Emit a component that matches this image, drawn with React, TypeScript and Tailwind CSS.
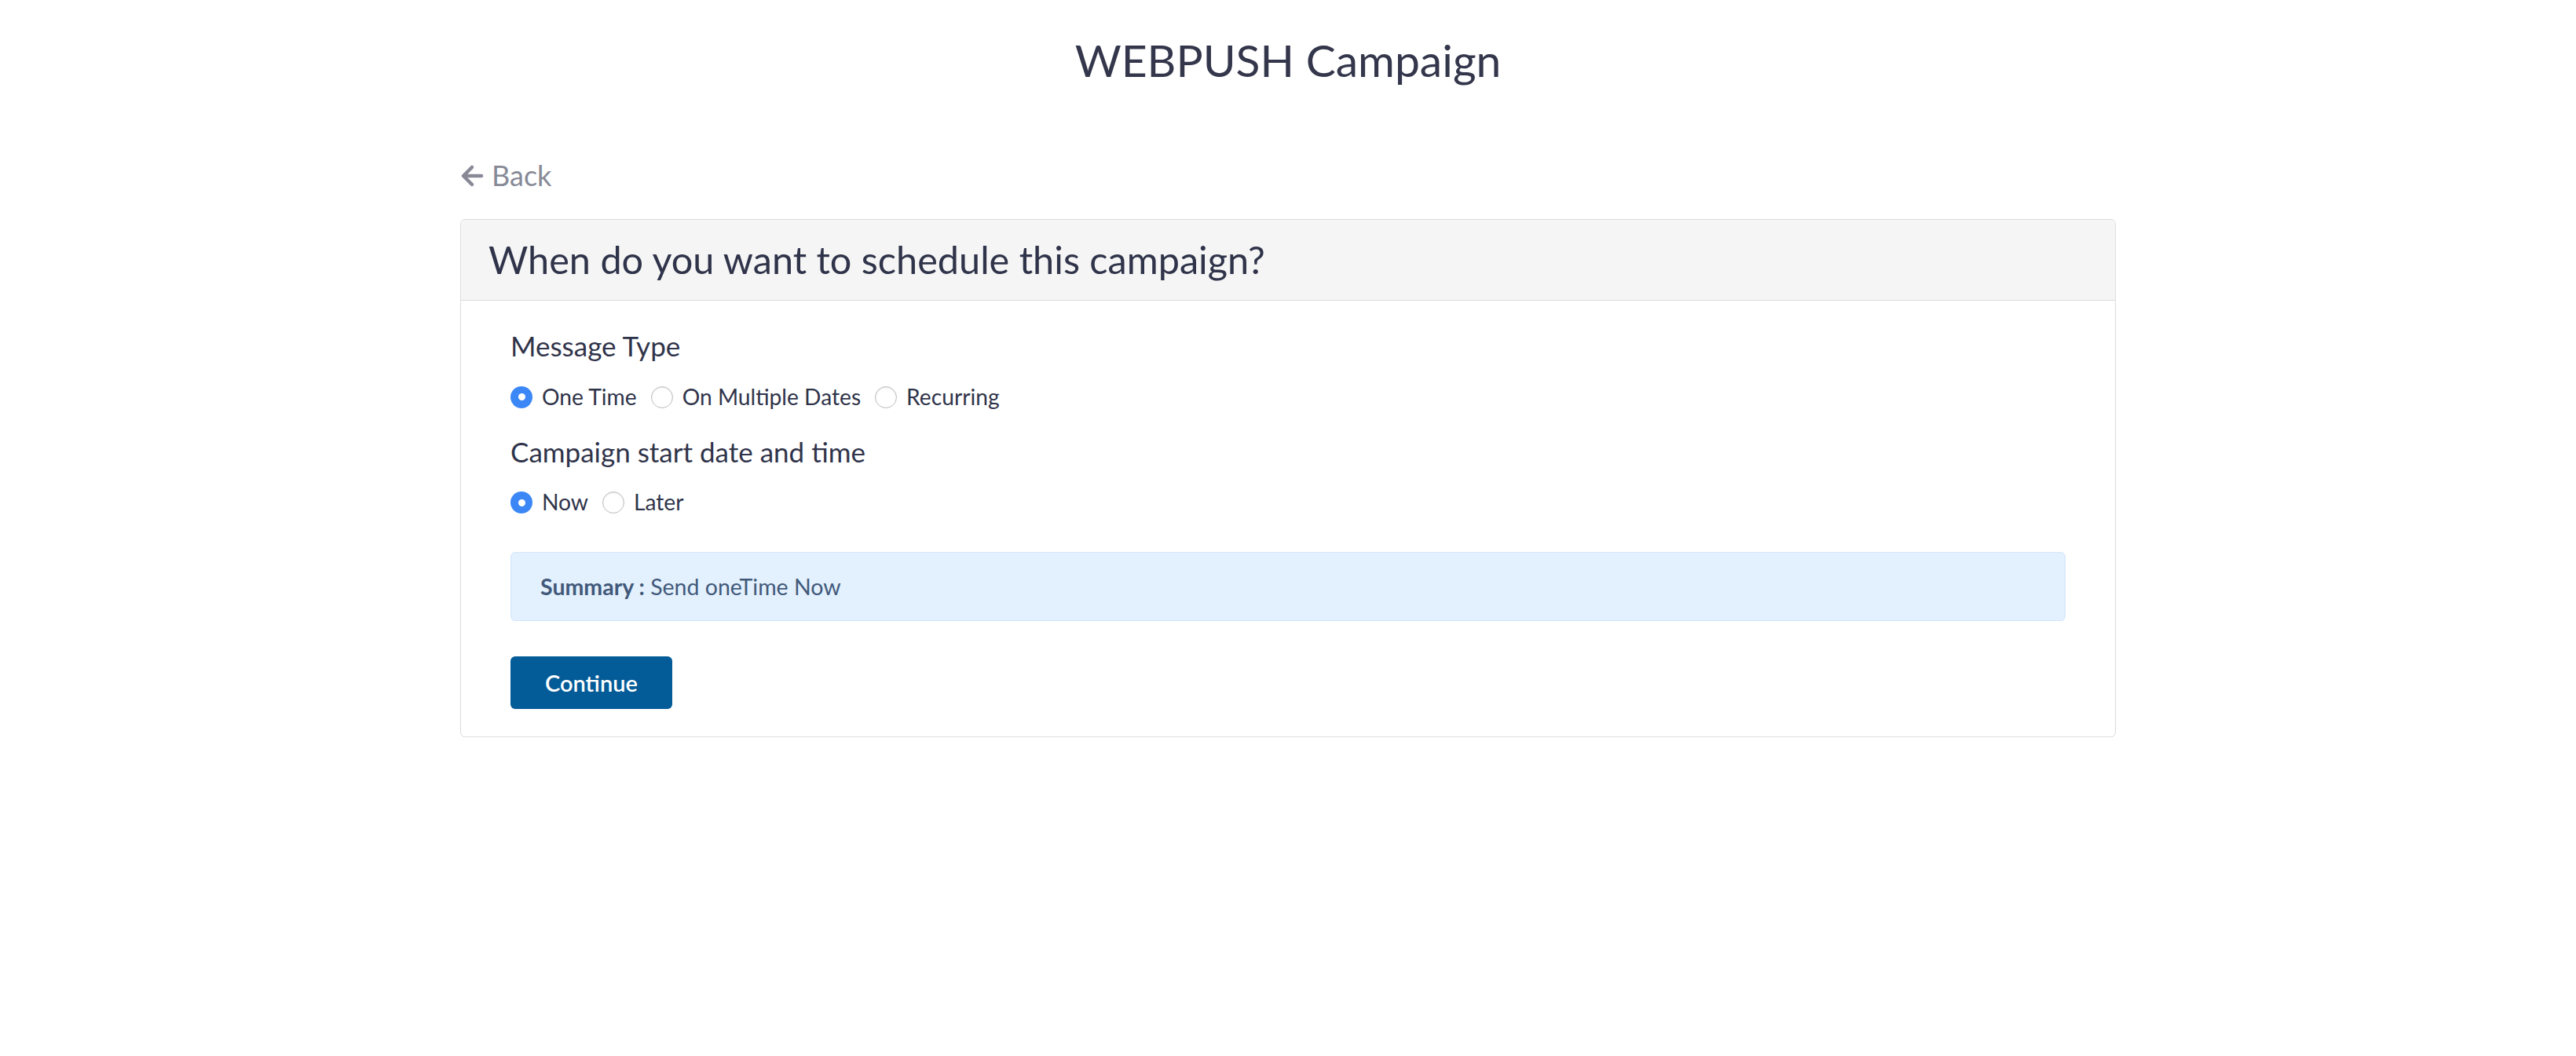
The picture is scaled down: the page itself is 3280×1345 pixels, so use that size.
import { useState } from "react";

type Option = { value: string; label: string };

const MESSAGE_TYPES: Option[] = [
  { value: "oneTime", label: "One Time" },
  { value: "multiple", label: "On Multiple Dates" },
  { value: "recurring", label: "Recurring" },
];

const START_OPTIONS: Option[] = [
  { value: "Now", label: "Now" },
  { value: "Later", label: "Later" },
];

export default function App() {
  const [messageType, setMessageType] = useState("oneTime");
  const [start, setStart] = useState("Now");

  return (
    <div className="min-h-screen w-full bg-white font-['Lato','Liberation_Sans',sans-serif] text-[#30344a]">
      <h1 className="pt-[42px] text-center text-[57px] leading-[1.2] font-normal text-[#34374b]">
        WEBPUSH Campaign
      </h1>

      <div className="mx-auto mt-[92px] w-[2108px]">
        <button
          type="button"
          className="flex items-center gap-[10px] text-[36px] leading-[1.2] text-[#878a96]"
        >
          <svg width="30" height="30" viewBox="0 0 30 30" fill="none">
            <path
              d="M27 15H4M15 4L4 15l11 11"
              stroke="currentColor"
              strokeWidth="4.5"
              strokeLinecap="round"
              strokeLinejoin="round"
            />
          </svg>
          <span>Back</span>
        </button>

        {/* schedule card */}
        <div className="mt-[33px] rounded-[6px] border border-[#dcdcdc] bg-white">
          <div className="flex h-[103px] items-center rounded-t-[6px] border-b border-[#dcdcdc] bg-[#f5f5f5] px-[35px]">
            <h2 className="text-[48.6px] leading-[1.2] font-normal text-[#30344a]">
              When do you want to schedule this campaign?
            </h2>
          </div>

          <div className="px-[63px] pt-[36px] pb-[35px]">
            <div className="text-[35px] leading-[1.2]">Message Type</div>
            <RadioGroup
              className="mt-[28px]"
              options={MESSAGE_TYPES}
              value={messageType}
              onChange={setMessageType}
            />

            <div className="mt-[32px] text-[35px] leading-[1.2]">
              Campaign start date and time
            </div>
            <RadioGroup
              className="mt-[27px]"
              options={START_OPTIONS}
              value={start}
              onChange={setStart}
            />

            <div className="mt-[46px] flex h-[88px] items-center rounded-[6px] border border-[#d2e6fb] bg-[#e3f0fd] px-[37px] text-[28.5px] text-[#41597a]">
              <span className="font-bold">Summary :</span>
              <span>&nbsp;Send {messageType} {start}</span>
            </div>

            <button
              type="button"
              className="mt-[45px] flex h-[67px] items-center justify-center rounded-[6px] bg-[#035b98] px-[44px] text-[29px] font-semibold text-white"
            >
              Continue
            </button>
          </div>
        </div>
      </div>
    </div>
  );
}

function RadioGroup({
  options,
  value,
  onChange,
  className,
}: {
  options: Option[];
  value: string;
  onChange: (v: string) => void;
  className?: string;
}) {
  return (
    <div className={`flex items-center gap-[18px] ${className ?? ""}`}>
      {options.map((o) => {
        const checked = o.value === value;
        return (
          <label
            key={o.value}
            className="flex cursor-pointer items-center gap-[12px] text-[28.2px] leading-[1.2]"
            onClick={() => onChange(o.value)}
          >
            {checked ? (
              <span className="flex h-[28px] w-[28px] items-center justify-center rounded-full bg-[#3c87f6]">
                <span className="h-[9px] w-[9px] rounded-full bg-white" />
              </span>
            ) : (
              <span className="h-[28px] w-[28px] rounded-full border border-[#bdbdbd] bg-white shadow-[inset_0_1px_2px_rgba(0,0,0,0.1)]" />
            )}
            <span>{o.label}</span>
          </label>
        );
      })}
    </div>
  );
}
